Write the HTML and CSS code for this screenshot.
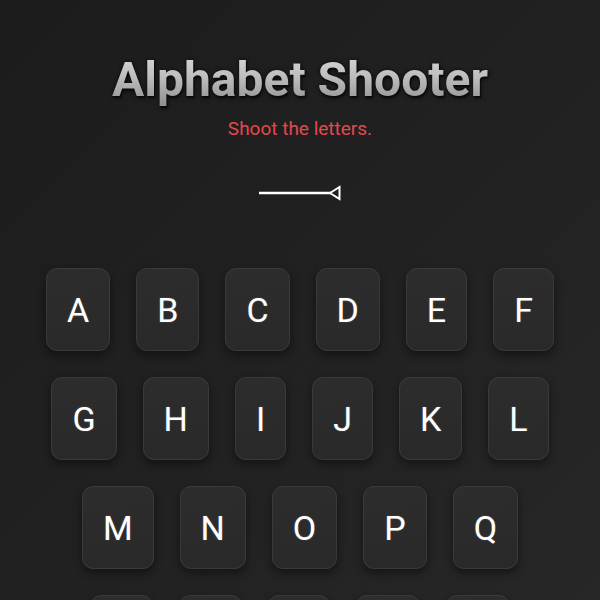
FILE: index.html
```html
<!DOCTYPE html>
<html lang="en">
<head>
<meta charset="utf-8">
<title>Alphabet Shooter</title>
<link rel="stylesheet" href="styles.css">
</head>
<body>
<main class="app">
  <header class="header">
    <h1 class="title">Alphabet Shooter</h1>
    <p class="subtitle">Shoot the letters.</p>
    <svg class="arrow" width="90" height="20" viewBox="0 0 90 20" aria-hidden="true">
      <line x1="4" y1="10" x2="76" y2="10" stroke="#fff" stroke-width="2.6"/>
      <polygon points="75,10 84.5,4 84.5,16" fill="none" stroke="#fff" stroke-width="2" stroke-linejoin="miter"/>
    </svg>
  </header>
  <section class="keys">
    <div class="row">
      <button class="key">A</button>
      <button class="key">B</button>
      <button class="key">C</button>
      <button class="key">D</button>
      <button class="key">E</button>
      <button class="key">F</button>
    </div>
    <div class="row">
      <button class="key">G</button>
      <button class="key">H</button>
      <button class="key">I</button>
      <button class="key">J</button>
      <button class="key">K</button>
      <button class="key">L</button>
    </div>
    <div class="row">
      <button class="key">M</button>
      <button class="key">N</button>
      <button class="key">O</button>
      <button class="key">P</button>
      <button class="key">Q</button>
    </div>
    <div class="row">
      <button class="key">R</button>
      <button class="key">S</button>
      <button class="key">T</button>
      <button class="key">U</button>
      <button class="key">V</button>
    </div>
    <div class="row">
      <button class="key">W</button>
      <button class="key">X</button>
      <button class="key">Y</button>
      <button class="key">Z</button>
    </div>
  </section>
</main>
</body>
</html>
```
FILE: styles.css
```css
html, body {
  margin: 0;
  padding: 0;
}
body {
  height: 100vh;
  background: linear-gradient(135deg, #1c1c1c 0%, #212121 50%, #272727 100%);
  font-family: Roboto, "Liberation Sans", sans-serif;
  color: #fff;
  overflow: hidden;
}
.app {
  display: flex;
  flex-direction: column;
  align-items: center;
  padding-top: 52px;
}
.header {
  display: flex;
  flex-direction: column;
  align-items: center;
}
.title {
  margin: 0;
  font-size: 48px;
  line-height: 56px;
  font-weight: 700;
  background: linear-gradient(180deg, #dadada 0%, #bdbdbd 45%, #8c8c8c 100%);
  -webkit-background-clip: text;
  background-clip: text;
  color: transparent;
  filter: drop-shadow(1px 2px 0 #0b0b0b) drop-shadow(0 0 2px rgba(0,0,0,0.7));
}
.subtitle {
  margin: 10px 0 0;
  font-size: 19px;
  line-height: 22px;
  color: #e5484b;
}
.arrow {
  display: block;
  margin-top: 43px;
}
.keys {
  margin-top: 65px;
  display: flex;
  flex-direction: column;
  align-items: center;
  gap: 26px;
}
.row {
  display: flex;
  justify-content: center;
  gap: 26px;
}
.key {
  height: 83px;
  padding: 0 20px;
  border: 1px solid #3a3a3a;
  border-radius: 11px;
  background: linear-gradient(170deg, #2d2d2d 0%, #292929 100%);
  box-shadow: 0 4px 10px rgba(0, 0, 0, 0.45);
  color: #fff;
  font-family: Roboto, "Liberation Sans", sans-serif;
  font-size: 34px;
  font-weight: 400;
  line-height: 1;
  display: flex;
  align-items: center;
  justify-content: center;
  text-shadow: 0 0 2px rgba(255, 255, 255, 0.2);
  cursor: pointer;
}
```
